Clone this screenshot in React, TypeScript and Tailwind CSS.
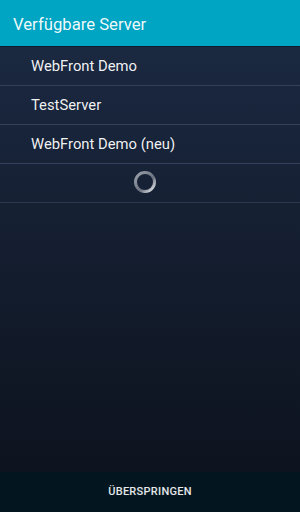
const servers = ["WebFront Demo", "TestServer", "WebFront Demo (neu)"];

function Spinner() {
  return (
    <svg width="26" height="26" viewBox="0 0 26 26">
      <defs>
        <linearGradient id="ring" x1="0" y1="0" x2="1" y2="1">
          <stop offset="0" stopColor="#9ca3ab" />
          <stop offset="0.6" stopColor="#6b7280" />
          <stop offset="1" stopColor="#f3f4f6" />
        </linearGradient>
      </defs>
      <circle cx="13" cy="13" r="9.5" fill="none" stroke="url(#ring)" strokeWidth="3" />
    </svg>
  );
}

export default function App() {
  return (
    <div
      className="w-[300px] h-[512px] flex flex-col bg-gradient-to-b from-[#1c2b45] to-[#0c111b] text-white"
      style={{ fontFamily: "Roboto, 'Noto Sans', sans-serif" }}
    >
      <header className="h-[42px] shrink-0 flex items-center px-[13px] pt-[4px] bg-[#00a5c3] border-b border-[#0f1a2c] box-content">
        <h1 className="text-[16.7px] text-white/95">Verfügbare Server</h1>
      </header>

      <ul className="flex flex-col">
        {servers.map((name) => (
          <li
            key={name}
            className="h-[39px] flex items-center pl-[31px] border-b border-[#33425a] text-[14.8px] text-white/95"
          >
            {name}
          </li>
        ))}
        <li className="h-[39px] flex items-center justify-center pr-[10px] pb-[2px] border-b border-[#2c3a50]">
          <Spinner />
        </li>
      </ul>

      <div className="flex-1" />

      <footer className="h-[40px] shrink-0 flex items-center justify-center bg-[#03161f]">
        <span className="text-[11px] font-medium text-white/90 tracking-wide">ÜBERSPRINGEN</span>
      </footer>
    </div>
  );
}
